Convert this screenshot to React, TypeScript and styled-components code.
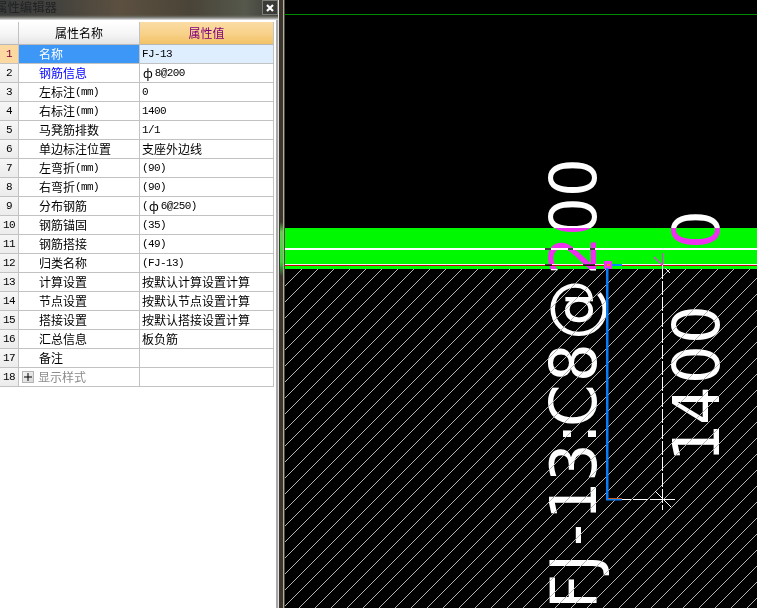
import React from 'react';
import styled, { createGlobalStyle } from 'styled-components';

const Global = createGlobalStyle`
  html, body { margin: 0; padding: 0; width: 757px; height: 608px; overflow: hidden; background: #000; }
  #root { width: 757px; height: 608px; }
`;

const Page = styled.div`
  display: flex;
  width: 757px;
  height: 608px;
  overflow: hidden;
  font-family: "Noto Sans CJK SC", "Liberation Sans", sans-serif;
`;

const Panel = styled.section`
  display: flex;
  flex-direction: column;
  box-sizing: border-box;
  width: 278px;
  flex: none;
  background: linear-gradient(90deg, #fff 276px, #a8a8a8 276px);
`;

const TitleBar = styled.header`
  display: flex;
  align-items: flex-start;
  justify-content: space-between;
  height: 20px;
  flex: none;
  overflow: hidden;
  background:
    linear-gradient(180deg, transparent 0, transparent 15px, #6e6e66 17px, #b8b8b8 19px, #eee 20px),
    linear-gradient(90deg, #3a3c3c 0, #45433e 60px, #5c5040 120px, #4a4438 190px, #55584c 245px, #3c3c38 278px);
`;

const TitleText = styled.span`
  margin-left: -5px;
  font-size: 12.4px;
  line-height: 15px;
  color: #202224;
  white-space: nowrap;
`;

const CloseButton = styled.button`
  display: flex;
  align-items: center;
  justify-content: center;
  box-sizing: border-box;
  width: 16px;
  height: 15px;
  padding: 0;
  border: 1px solid #7c7c76;
  background: #3a3a38;
`;

const Grid = styled.div`
  display: flex;
  flex-direction: column;
  width: 274px;
  padding-top: 2px;
`;

const Row = styled.div`
  display: grid;
  grid-template-columns: 19px 121px 134px;
  height: 19px;
`;

const HeaderRow = styled(Row)`
  height: 23px;
`;

const Cell = styled.div<{ $bg?: string; $color?: string }>`
  box-sizing: border-box;
  display: flex;
  align-items: center;
  overflow: hidden;
  white-space: pre;
  font-size: 12px;
  line-height: 16px;
  border-right: 1px solid #c2c2c2;
  border-bottom: 1px solid #c2c2c2;
  background: ${p => p.$bg ?? '#fff'};
  color: ${p => p.$color ?? '#000'};
`;

const HeaderCell = styled(Cell)`
  justify-content: center;
  border-bottom-color: #b8b8b8;
  background: ${p => p.$bg ?? 'linear-gradient(180deg, #ffffff 0%, #f4f4f4 60%, #e4e4e4 100%)'};
`;

const NumCell = styled(Cell)`
  justify-content: center;
  background: ${p => p.$bg ?? 'linear-gradient(180deg, #f6f6f6, #ececec)'};
`;

const NameCell = styled(Cell)`
  padding-left: 20px;
`;

const TreeNameCell = styled(Cell)`
  padding-left: 3px;
  gap: 4px;
`;

const ValueCell = styled(Cell)`
  padding-left: 2px;
`;

const Latin = styled.span`
  font-family: "Liberation Mono", "DejaVu Sans Mono", monospace;
  font-size: 11px;
  letter-spacing: -0.6px;
`;

const Rebar = styled.span`
  margin: 0 2px 0 1px;
`;

const PlusBox = styled.span`
  display: flex;
  align-items: center;
  justify-content: center;
  box-sizing: border-box;
  width: 12px;
  height: 12px;
  flex: none;
  border: 1px solid #b4b4b4;
  background: linear-gradient(135deg, #f4f4f4, #d8d8d8);
`;

const Splitter = styled.div`
  width: 7px;
  height: 608px;
  flex: none;
  background:
    linear-gradient(180deg, transparent 222px, #5fd24a 232px, #38d838 262px, transparent 276px) 2px 0 / 3px 100% no-repeat,
    linear-gradient(90deg, #e2e2e2 0, #e2e2e2 1px, #3a362e 1px, #3a362e 5px, #b4ae98 5px, #b4ae98 6px, #4a463c 6px);
`;

const Canvas = styled.div`
  flex: 1;
  height: 608px;
  background: #000;
`;

const Drawing = styled.svg`
  display: block;
`;

const CadText = styled.text`
  font-family: "DejaVu Sans", "Liberation Sans", sans-serif;
  font-size: 64px;
`;

const HatchGroup = styled.g`
  mix-blend-mode: difference;
`;

const Mixed = ({ text }: { text: string }) => (
  <>
    {text.split(/([\x20-\x7e]+)/).map((part, i) => {
      if (/^[\x20-\x7e]+$/.test(part)) return <Latin key={i}>{part}</Latin>;
      if (part === 'ф') return <Rebar key={i}>{part}</Rebar>;
      return part;
    })}
  </>
);

type RowData = { n: string; name: string; value: string };

const rows: RowData[] = [
  { n: '1', name: '名称', value: 'FJ-13' },
  { n: '2', name: '钢筋信息', value: 'ф8@200' },
  { n: '3', name: '左标注(mm)', value: '0' },
  { n: '4', name: '右标注(mm)', value: '1400' },
  { n: '5', name: '马凳筋排数', value: '1/1' },
  { n: '6', name: '单边标注位置', value: '支座外边线' },
  { n: '7', name: '左弯折(mm)', value: '(90)' },
  { n: '8', name: '右弯折(mm)', value: '(90)' },
  { n: '9', name: '分布钢筋', value: '(ф6@250)' },
  { n: '10', name: '钢筋锚固', value: '(35)' },
  { n: '11', name: '钢筋搭接', value: '(49)' },
  { n: '12', name: '归类名称', value: '(FJ-13)' },
  { n: '13', name: '计算设置', value: '按默认计算设置计算' },
  { n: '14', name: '节点设置', value: '按默认节点设置计算' },
  { n: '15', name: '搭接设置', value: '按默认搭接设置计算' },
  { n: '16', name: '汇总信息', value: '板负筋' },
  { n: '17', name: '备注', value: '' },
];

const SX = 0.95;
const positions = (list: number[]) => list.map(v => (v / SX).toFixed(1)).join(' ');

const mainX = positions([-6, 31, 57, 83, 121, 159, 176, 221, 263, 328, 367, 406]);
const dimX = positions([-7, 30, 71, 111]);

const CadLabels = ({ fill }: { fill: string }) => (
  <g fill={fill}>
    <CadText transform={`translate(596 603) rotate(-90) scale(${SX} 1)`} x={mainX}>FJ-13:C8@200</CadText>
    <CadText transform={`translate(719 455) rotate(-90) scale(${SX} 1)`} x={dimX}>1400</CadText>
    <CadText transform={`translate(719 245) rotate(-90) scale(${SX} 1)`} x={(-4 / SX).toFixed(1)}>0</CadText>
  </g>
);

const hatchLines = Array.from({ length: 60 }, (_, k) => 571 + 16 * k);

const CadView = () => (
  <Drawing width="472" height="608" viewBox="285 0 472 608">
    <defs>
      <clipPath id="band"><rect x="285" y="228" width="472" height="41" /></clipPath>
      <clipPath id="below"><rect x="285" y="269" width="472" height="339" /></clipPath>
    </defs>
    <rect x="285" y="14" width="472" height="1" fill="#008a00" />
    <rect x="285" y="228" width="472" height="41" fill="#00f800" />
    <CadLabels fill="#fff" />
    <g clipPath="url(#band)">
      <rect x="285" y="228" width="472" height="41" fill="#00f800" />
      <CadLabels fill="#f030f0" />
    </g>
    <rect x="285" y="248" width="472" height="2" fill="#fff" />
    <rect x="285" y="264" width="472" height="1" fill="#f4f4f4" />
    <rect x="285" y="265" width="472" height="1" fill="#c80000" />
    <path d="M545 249h6M568 249h5M590 249h5M545 265h7M583 265h12" stroke="#000" strokeWidth="1.5" />
    <g clipPath="url(#below)">
      <HatchGroup>
        <g stroke="#b4b4b4" strokeWidth="1" shapeRendering="crispEdges">
          {hatchLines.map(c => (
            <line key={c} x1={c - 269} y1={269} x2={c - 608} y2={608} />
          ))}
        </g>
      </HatchGroup>
    </g>
    <rect x="622" y="264" width="53" height="1" fill="#e8ffff" />
    <rect x="612" y="264" width="10" height="2" fill="#0a84ff" />
    <rect x="604" y="261" width="8" height="8" fill="#f030f0" />
    <rect x="607" y="264" width="3" height="2" fill="#ff8000" />
    <rect x="606" y="268" width="2.5" height="232" fill="#0a7cf8" />
    <rect x="606" y="498.5" width="16" height="2" fill="#0a7cf8" />
    <rect x="608" y="498" width="14" height="1" fill="#c06020" />
    <path d="M622 499.5H675" stroke="#fff" strokeDasharray="9 2 15 2 25" />
    <path d="M662.5 265V510" stroke="#fff" strokeDasharray="14 2" />
    <path d="M662.5 253V265M654 257L662 265" stroke="#f030f0" strokeWidth="1.2" />
    <path d="M665 268L670 273M655 491L671 507" stroke="#fff" />
  </Drawing>
);

export default function App() {
  return (
    <Page>
      <Global />
      <Panel>
        <TitleBar>
          <TitleText>属性编辑器</TitleText>
          <CloseButton aria-label="关闭">
            <svg width="8" height="8" viewBox="0 0 8 8">
              <path d="M1 1L7 7M7 1L1 7" stroke="#fff" strokeWidth="2.2" />
            </svg>
          </CloseButton>
        </TitleBar>
        <Grid>
          <HeaderRow>
            <HeaderCell />
            <HeaderCell>属性名称</HeaderCell>
            <HeaderCell $bg="linear-gradient(180deg, #fbdca4 0%, #f8d28c 50%, #f2c264 100%)" $color="#800080">属性值</HeaderCell>
          </HeaderRow>
          {rows.map((r, i) => {
            const active = i === 0;
            return (
              <Row key={r.n}>
                <NumCell $bg={active ? '#fcd9a0' : undefined} $color={active ? '#800040' : '#000'}><Latin>{r.n}</Latin></NumCell>
                <NameCell $bg={active ? '#3d97f6' : '#fff'} $color={active ? '#fff' : i === 1 ? '#0000ff' : '#000'}>
                  <Mixed text={r.name} />
                </NameCell>
                <ValueCell $bg={active ? '#deeeff' : '#fff'}><Mixed text={r.value} /></ValueCell>
              </Row>
            );
          })}
          <Row>
            <NumCell><Latin>18</Latin></NumCell>
            <TreeNameCell $color="#8c8c8c">
              <PlusBox>
                <svg width="8" height="8" viewBox="0 0 8 8">
                  <path d="M0 4H8M4 0V8" stroke="#000" strokeWidth="1" />
                </svg>
              </PlusBox>
              显示样式
            </TreeNameCell>
            <ValueCell />
          </Row>
        </Grid>
      </Panel>
      <Splitter />
      <Canvas>
        <CadView />
      </Canvas>
    </Page>
  );
}
